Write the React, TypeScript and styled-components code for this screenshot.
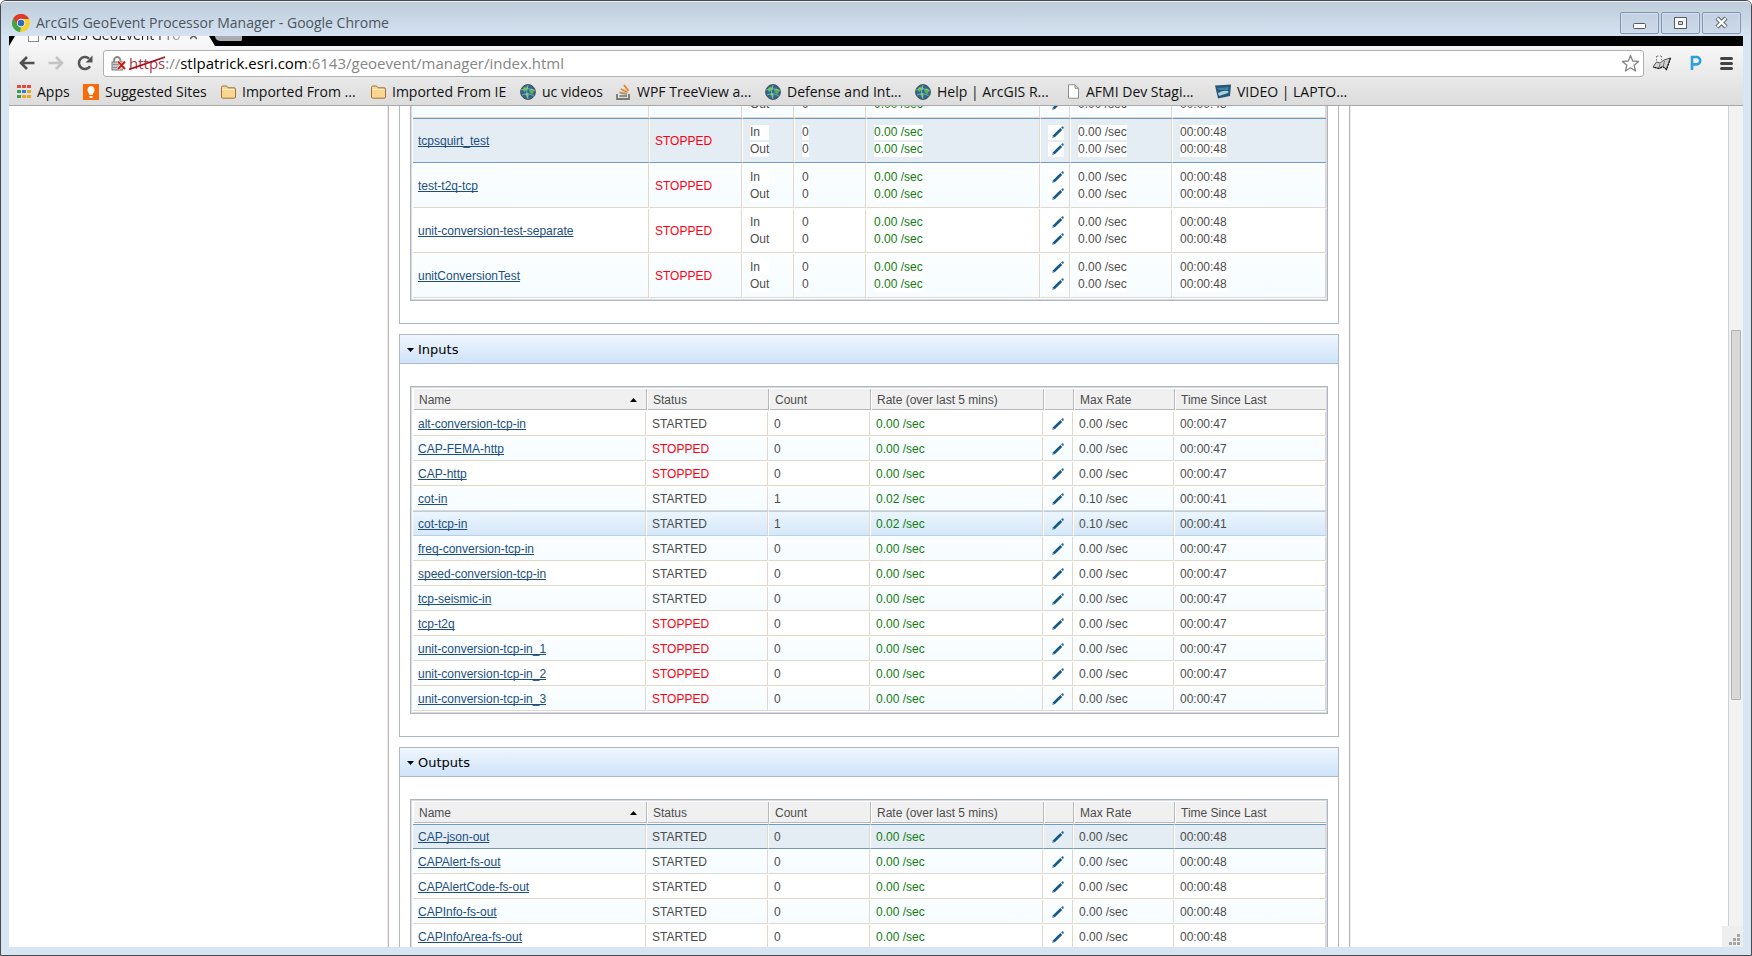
import React from "react";
import styled, { createGlobalStyle, css } from "styled-components";

const uiFont = `"Open Sans", "Noto Sans", sans-serif`;

const GlobalStyle = createGlobalStyle`
  * { box-sizing: border-box; }
  html, body { margin: 0; height: 100%; overflow: hidden; }
  #root { height: 100%; }
  button { font: inherit; color: inherit; background: none; border: 0; padding: 0; cursor: pointer; }
  svg { display: block; flex: none; }
`;

/* ---------- window frame ---------- */

const Window = styled.div`
  display: flex;
  flex-direction: column;
  height: 100vh;
  padding: 0 8px 8px;
  border: 1px solid #4b4a4e;
  border-radius: 6px 6px 0 0;
  background: #d7e4f1;
  font-family: ${uiFont};
`;

const TitleBar = styled.header`
  display: flex;
  align-items: center;
  flex: none;
  height: 35px;
  margin: 0 -8px;
  padding: 7px 10px 0 11px;
  gap: 6px;
  border-top: 1px solid #e6edf5;
  border-radius: 5px 5px 0 0;
  background: linear-gradient(#bfccda, #d4e2f1);
`;

const Title = styled.h1`
  flex: 1;
  margin: 0;
  font-size: 14px;
  font-weight: 400;
  line-height: 20px;
  color: #4c5660;
`;

const WindowButtons = styled.div`
  display: flex;
  gap: 2px;
`;

const WindowButton = styled.button`
  display: flex;
  align-items: center;
  justify-content: center;
  width: 39px;
  height: 22px;
  border: 1px solid #8093b1;
  border-radius: 2px;
  background: linear-gradient(#c3d1e2, #cbd8e8);
  box-shadow: inset 0 0 0 1px #d3deeb;
`;

const TabStrip = styled.div`
  display: flex;
  flex: none;
  height: 10px;
  overflow: hidden;
  background: #000;
`;

const Tab = styled.div`
  display: flex;
  align-items: flex-end;
  width: 206px;
  padding: 0 0 2px 19px;
  background: #f7f7f7;
  clip-path: polygon(0 100%, 6px 0, 200px 0, 206px 100%);
`;

const TabTitle = styled.span`
  flex: none;
  width: 138px;
  margin: 0 7px 0 6px;
  overflow: hidden;
  font-size: 14px;
  line-height: 18px;
  white-space: nowrap;
  color: transparent;
  background: linear-gradient(90deg, #222 112px, #ccc);
  background-clip: text;
`;

const TabSheet = styled.span`
  width: 11px;
  height: 14px;
  margin-bottom: 2px;
  border: 1px solid #8a8a8a;
  background: #fff;
`;

const TabClose = styled.button`
  padding-bottom: 4px;
`;

const NewTab = styled.button`
  width: 27px;
  height: 5px;
  background: #a9adb2;
  border-radius: 0 0 2px 8px;
`;

const Toolbars = styled.div`
  flex: none;
  border-bottom: 1px solid #a8a8a8;
  background: linear-gradient(#f7f7f7, #dcdcdc);
`;

const NavRow = styled.nav`
  display: flex;
  align-items: center;
  height: 34px;
  padding: 0 10px 0 3px;
`;

const NavButton = styled.button`
  display: flex;
  justify-content: center;
  width: 29px;
`;

const AddressBar = styled.div`
  display: flex;
  flex: 1;
  align-items: center;
  height: 27px;
  margin: 1px 0 0 4px;
  padding: 0 3px 0 7px;
  border: 1px solid #b0b0b0;
  border-radius: 3px;
  background: #fff;
`;

const Url = styled.div`
  flex: 1;
  margin-left: 3px;
  padding-bottom: 2px;
  font-size: 15px;
  line-height: 20px;
  color: #858585;
  outline: none;
`;

const Scheme = styled.s`
  position: relative;
  color: #a33a48;
  text-decoration: none;
`;

const Strike = styled.svg`
  position: absolute;
  left: 0;
  top: 3px;
  width: 100%;
  height: 15px;
`;

const Host = styled.span`
  color: #000;
`;

const Extensions = styled.div`
  display: flex;
  align-items: center;
  gap: 18px;
  padding-left: 8px;
`;

const BookmarkRow = styled.nav`
  display: flex;
  align-items: center;
  height: 25px;
  padding: 0 0 2px 8px;
`;

const Bookmark = styled.a<{ $width: number }>`
  display: flex;
  align-items: center;
  flex: none;
  gap: 6px;
  width: ${(p) => p.$width}px;
  font-size: 14px;
  line-height: 20px;
  white-space: nowrap;
  text-decoration: none;
  color: #111;
`;

/* ---------- page ---------- */

const Viewport = styled.div`
  position: relative;
  display: flex;
  flex: 1;
  min-height: 0;
  background: #fff;
`;

const Page = styled.main`
  flex: 1;
  height: 100%;
  padding-left: 1px;
  overflow: hidden;
  font-family: "Liberation Sans", Arial, sans-serif;
  font-size: 12px;
  color: #4c4c4c;
`;

const Sheet = styled.div`
  display: flex;
  flex-direction: column;
  gap: 10px;
  max-width: 962px;
  margin: -37px auto 0;
  padding: 0 10px;
  border: solid #b8b8b8;
  border-width: 0 1px;
  box-shadow: 0 0 0 1px #ececec;
`;

const ScrollTrack = styled.div`
  display: grid;
  flex: none;
  grid-template-rows: 224fr 370fr 247fr;
  width: 15px;
  padding: 0 2px;
  border-left: 1px solid #d0d0d0;
  background: #f2f2f2;
`;

const ScrollThumb = styled.div`
  grid-row: 2;
  border: 1px solid #b0b0b0;
  border-radius: 1px;
  background: #d9d9d9;
`;

const ResizeGrip = styled.div`
  position: absolute;
  right: 0;
  bottom: 0;
  padding: 8px 3px 2px 7px;
  background: #eee;
`;

const Panel = styled.section`
  border: 1px solid #b0b7c6;
`;

const PanelHeading = styled.h2`
  margin: 0;
  border-bottom: 1px solid #b0b7c6;
  background: linear-gradient(#eff6fe, #cfe3f9);
  font: 400 13px/28px "DejaVu Sans", Verdana, sans-serif;
  color: #000;
`;

const PanelToggle = styled.button`
  display: flex;
  align-items: center;
  gap: 4px;
  width: 100%;
  height: 28px;
  padding: 2px 0 0 7px;
`;

const TableFrame = styled.div<{ $flush?: boolean }>`
  margin: ${(p) => (p.$flush ? 0 : 22)}px 10px 22px;
  padding: 2px 1px 2px 2px;
  border: 1px solid #b0b5c3;
  box-shadow: inset 0 0 0 1px #d9dae2;
`;

const Grid = styled.table`
  width: 100%;
  table-layout: fixed;
  border-collapse: separate;
  border-spacing: 0;
`;

const HeadCell = styled.th`
  height: 22px;
  padding: 0 9px 0 5px;
  border: 1px solid #fff;
  border-top: 0;
  border-right: 1px solid #b8b8b8;
  background: #f0f0f0 padding-box;
  box-shadow: inset 0 -1px #b8b8b8;
  font-weight: 400;
  line-height: 20px;
  text-align: left;
  white-space: nowrap;
  &:last-child { border-right: 0; }
`;

const SortLabel = styled.span`
  display: flex;
  align-items: center;
  justify-content: space-between;
`;

type Mark = "selected" | "hover" | undefined;

const Row = styled.tr<{ $mark?: Mark; $tall?: boolean; $tint?: boolean }>`
  > td {
    height: ${(p) => (p.$tall ? 45 : 25)}px;
    padding: 0 0 0 5px;
    border: solid #fff;
    border-width: 1px 1px 1px 0;
    border-bottom-color: #e0d8c9;
    background: ${(p) => (p.$tint ? "linear-gradient(#fbfeff, #f6fcff)" : "#fff")} padding-box;
    box-shadow: inset -1px 0 #e0d8cc;
    ${(p) =>
      p.$mark === "selected" &&
      css`
        border-top-color: #6f9ac4;
        border-bottom-color: #6f9ac4;
        background: #e4ecf4 padding-box;
      `}
    ${(p) =>
      p.$mark === "hover" &&
      css`
        border-top-color: #b5d0ea;
        border-bottom-color: #b5d0ea;
        background: linear-gradient(#ebf5fd, #d6e8f9);
      `}
  }
  > td:last-child { border-right: 0; }
`;

const NameLink = styled.a`
  color: #1c4f80;
  text-decoration: underline;
  text-decoration-thickness: 1px;
  text-underline-offset: 1px;
  text-decoration-skip-ink: none;
`;

const Status = styled.span<{ $stopped: boolean }>`
  color: ${(p) => (p.$stopped ? "#ff0010" : "inherit")};
`;

const Rate = styled.span`
  color: #107c10;
`;

const Pair = styled.div`
  display: inline-grid;
  gap: 2px;
  padding-left: 2px;
  line-height: 15px;
  vertical-align: middle;
  > * { background: #fff; }
`;

const EditButton = styled.button<{ $wide?: boolean }>`
  display: flex;
  align-items: center;
  justify-content: flex-end;
  width: ${(p) => (p.$wide ? 16 : 15)}px;
  height: 15px;
`;

/* ---------- drawings ---------- */

const Pencil = () => (
  <svg width="12" height="12" viewBox="0 0 12 12">
    <path d="M1 9.2 L8.3 2.1 L10.2 4 L3 10.9 L0.2 12 Z" fill="#12598a" />
    <path d="M9 1.4 L10.3 0.3 Q11.3 0 11.8 1.1 Q12 1.9 11.3 2.7 L10.8 3.2 Z" fill="#3b7195" />
    <path d="M0.9 10.1 L2.1 11.1 L0.2 11.9 Z" fill="#b9d0df" />
  </svg>
);

const ChromeLogo = ({ size = 18 }: { size?: number }) => (
  <svg width={size} height={size} viewBox="0 0 18 18">
    <circle cx="9" cy="9" r="9" fill="#f9cf2a" />
    <path d="M1.2 4.5 A9 9 0 0 1 16.8 4.5 L17 5 H9 L5.3 11 Z" fill="#dc3a2c" />
    <path d="M1.2 4.5 L5.5 11.2 L9 13 L8 18 A9 9 0 0 1 1.2 4.5 Z" fill="#3fa648" />
    <circle cx="9" cy="9" r="4.2" fill="#f3f6fa" />
    <circle cx="9" cy="9" r="3.3" fill="#2c6fb8" />
  </svg>
);

const BackArrow = () => (
  <svg width="16" height="14" viewBox="0 0 16 14" fill="none" stroke="#505050" strokeWidth="2.6">
    <path d="M15.5 7 H2.5 M8 1 L2 7 L8 13" />
  </svg>
);

const ForwardArrow = () => (
  <svg width="16" height="14" viewBox="0 0 16 14" fill="none" stroke="#c4c4c4" strokeWidth="2.6">
    <path d="M0.5 7 H13.5 M8 1 L14 7 L8 13" />
  </svg>
);

const Reload = () => (
  <svg width="16" height="16" viewBox="0 0 16 16">
    <path d="M13 11.2 A6 6 0 1 1 12 3.6" fill="none" stroke="#555" strokeWidth="2.6" />
    <path d="M15.5 0.5 V7.5 H8.5 Z" fill="#555" />
  </svg>
);

const BrokenLock = () => (
  <svg width="15" height="15" viewBox="0 0 15 15">
    <path d="M3 7 V4.5 A3.2 3.4 0 0 1 9.4 4.5 V7" fill="none" stroke="#8a8a8a" strokeWidth="2" />
    <rect x="1" y="6" width="10.5" height="8" fill="#c6c6c6" stroke="#7d7d7d" />
    <path d="M2 8.5 H8 M2 11.5 H7" stroke="#8f8f8f" />
    <path d="M7 5.5 L14 13 M14 5.5 L7 13" stroke="#fff" strokeWidth="3" />
    <path d="M7 5.5 L14 13 M14 5.5 L7 13" stroke="#cc1c1c" strokeWidth="2" />
  </svg>
);

const Star = () => (
  <svg width="19" height="19" viewBox="0 0 19 19">
    <path
      d="M9.5 1.5 L11.7 7 L17.6 7.4 L13.1 11.2 L14.6 17 L9.5 13.8 L4.4 17 L5.9 11.2 L1.4 7.4 L7.3 7 Z"
      fill="#fff"
      stroke="#858585"
      strokeWidth="1.3"
      strokeLinejoin="round"
    />
  </svg>
);

const MapTool = () => (
  <svg width="20" height="16" viewBox="0 0 20 16">
    <path d="M4.5 7 L8 8 L12 5 L18.5 3 L14.5 14.5 L11 11.5 L7 13.5 L1 12 Z" fill="#d3d3d3" stroke="#555" />
    <path d="M18.5 3 L14.5 14.5 L11 11.5 L7 13.5 L1 12" fill="none" stroke="#222" strokeWidth="1.4" strokeDasharray="2 1" />
    <path d="M8 9 L7 13 M12.5 6 L11 12" stroke="#777" />
    <path d="M4.5 1 V6 M9.5 1 V5 M5 1 H9" stroke="#777" strokeDasharray="1.5 1.5" />
  </svg>
);

const PinLogo = () => (
  <svg width="12" height="16" viewBox="0 0 12 16">
    <path d="M2 15 V2 H6.5 A3.6 3.6 0 0 1 6.5 9.4 H3" fill="none" stroke="#2f9fdb" strokeWidth="2.6" />
  </svg>
);

const MenuBars = () => (
  <svg width="13" height="13" viewBox="0 0 13 13" stroke="#444" strokeWidth="3" strokeLinecap="round">
    <path d="M1.5 1.5 H11.5 M1.5 6.5 H11.5 M1.5 11.5 H11.5" />
  </svg>
);

const appColors = ["#e24b3c", "#e24b3c", "#e24b3c", "#3f9b55", "#2f7de0", "#eda51a", "#3f9b55", "#eda51a", "#eda51a"];

const AppsIcon = () => (
  <svg width="14" height="13" viewBox="0 0 14 13">
    {appColors.map((fill, i) => (
      <rect key={i} x={(i % 3) * 5} y={Math.floor(i / 3) * 5} width="4" height="3" fill={fill} />
    ))}
  </svg>
);

const Bulb = () => (
  <svg width="16" height="16" viewBox="0 0 16 16">
    <rect width="16" height="16" fill="#f76b0b" />
    <path d="M8 2 A4 4 0 0 1 10.2 9 L9.7 11 H6.3 L5.8 9 A4 4 0 0 1 8 2 Z M6.5 12 H9.5 V14 H6.5 Z" fill="#fff" />
  </svg>
);

const Folder = () => (
  <svg width="15" height="14" viewBox="0 0 15 14">
    <path d="M0.5 12 V2.5 Q0.5 1 2 1 H5.5 L7 2.8 H13 Q14.5 2.8 14.5 4 V12 Q14.5 13.2 13 13.2 H2 Q0.5 13.2 0.5 12 Z" fill="#fbd691" stroke="#a37038" />
    <path d="M1.5 4.5 H13.5" stroke="#fff0cc" />
  </svg>
);

const Globe = () => (
  <svg width="16" height="16" viewBox="0 0 16 16">
    <circle cx="8" cy="8" r="7.4" fill="#2c6796" stroke="#4a4f4a" />
    <path d="M3 4 Q6 1.5 8 3 L7 6 L4.5 8 L3 7 Z M9 6 Q12 3 14 6 L13 10 L10 9 Z M5 10 L8 9 L9 12 L7 14 Z" fill="#57b24c" />
    <path d="M1 6 Q8 3 15 7 M2 11 Q8 8 14 12 M8 1 Q5 8 8 15" fill="none" stroke="#b8d6cf" strokeWidth="0.6" />
  </svg>
);

const Stack = () => (
  <svg width="15" height="16" viewBox="0 0 15 16" fill="none">
    <path d="M1 10 V15 H13 V10" stroke="#777" strokeWidth="1.8" />
    <path d="M3.5 12 H11" stroke="#8a8278" strokeWidth="1.8" />
    <path d="M3.5 8.5 L11 10" stroke="#b5946c" strokeWidth="1.8" />
    <path d="M4.8 5 L11.5 8.3" stroke="#dc8d33" strokeWidth="1.8" />
    <path d="M8 1 L12.5 6.8" stroke="#f27a21" strokeWidth="1.8" />
  </svg>
);

const SheetIcon = () => (
  <svg width="13" height="15" viewBox="0 0 13 15">
    <path d="M1.5 0.8 H8 L11.5 4.3 V14.2 H1.5 Z M8 0.8 V4.3 H11.5" fill="#fff" stroke="#8d8d8d" />
  </svg>
);

const VideoIcon = () => (
  <svg width="16" height="15" viewBox="0 0 16 15">
    <path d="M0 1.5 L16 0.5 L15 12 L3 14.5 Z" fill="#24587a" />
    <path d="M2 4 L14 3 L13 6 L4 6 Z" fill="#3f7da3" />
    <path d="M3 9 Q8 6 13.5 7 L13 9 L4 12 Z" fill="#a9cfe0" />
  </svg>
);

const Triangle = ({ up }: { up?: boolean }) => (
  <svg width="7" height="4" viewBox="0 0 7 4">
    <path d={up ? "M0 4 L3.5 0 L7 4 Z" : "M0 0 H7 L3.5 4 Z"} fill="#000" />
  </svg>
);

const GripDots = () => (
  <svg width="11" height="11" viewBox="0 0 11 11" fill="#a5a5a5">
    {[[8, 0], [4, 4], [8, 4], [0, 8], [4, 8], [8, 8]].map(([x, y]) => (
      <rect key={`${x}-${y}`} x={x} y={y} width="3" height="3" />
    ))}
  </svg>
);

/* ---------- data ---------- */

const bookmarks = [
  { label: "Apps", icon: <AppsIcon />, width: 66 },
  { label: "Suggested Sites", icon: <Bulb />, width: 138 },
  { label: "Imported From ...", icon: <Folder />, width: 150 },
  { label: "Imported From IE", icon: <Folder />, width: 149 },
  { label: "uc videos", icon: <Globe />, width: 96 },
  { label: "WPF TreeView a...", icon: <Stack />, width: 149 },
  { label: "Defense and Int...", icon: <Globe />, width: 150 },
  { label: "Help | ArcGIS R...", icon: <Globe />, width: 152 },
  { label: "AFMI Dev Stagi...", icon: <SheetIcon />, width: 148 },
  { label: "VIDEO | LAPTO...", icon: <VideoIcon />, width: 140 },
];

interface Service {
  name: string;
  mark?: Mark;
}

const services: Service[] = [
  { name: "" },
  { name: "tcpsquirt_test", mark: "selected" },
  { name: "test-t2q-tcp" },
  { name: "unit-conversion-test-separate" },
  { name: "unitConversionTest" },
];

interface Connector {
  name: string;
  stopped?: boolean;
  count?: number;
  rate?: string;
  max?: string;
  since: string;
  mark?: Mark;
}

const inputs: Connector[] = [
  { name: "alt-conversion-tcp-in", since: "00:00:47" },
  { name: "CAP-FEMA-http", stopped: true, since: "00:00:47" },
  { name: "CAP-http", stopped: true, since: "00:00:47" },
  { name: "cot-in", count: 1, rate: "0.02", max: "0.10", since: "00:00:41" },
  { name: "cot-tcp-in", count: 1, rate: "0.02", max: "0.10", since: "00:00:41", mark: "hover" },
  { name: "freq-conversion-tcp-in", since: "00:00:47" },
  { name: "speed-conversion-tcp-in", since: "00:00:47" },
  { name: "tcp-seismic-in", since: "00:00:47" },
  { name: "tcp-t2q", stopped: true, since: "00:00:47" },
  { name: "unit-conversion-tcp-in_1", stopped: true, since: "00:00:47" },
  { name: "unit-conversion-tcp-in_2", stopped: true, since: "00:00:47" },
  { name: "unit-conversion-tcp-in_3", stopped: true, since: "00:00:47" },
];

const outputs: Connector[] = [
  { name: "CAP-json-out", since: "00:00:48", mark: "selected" },
  { name: "CAPAlert-fs-out", since: "00:00:48" },
  { name: "CAPAlertCode-fs-out", since: "00:00:48" },
  { name: "CAPInfo-fs-out", since: "00:00:48" },
  { name: "CAPInfoArea-fs-out", since: "00:00:48" },
];

const serviceCols = [237, 93, 52, 72, 174, 30, 102, 153];
const connectorCols = [234, 122, 102, 173, 30, 101, 151];

const Col = styled.col<{ $w: number }>`
  width: ${(p) => p.$w}px;
`;

const Columns = ({ widths }: { widths: number[] }) => (
  <colgroup>
    {widths.map((w, i) => (
      <Col key={i} $w={w} />
    ))}
  </colgroup>
);

const Twice = ({ children }: { children: React.ReactNode }) => (
  <Pair>
    <span>{children}</span>
    <span>{children}</span>
  </Pair>
);

const ServiceTable = () => (
  <TableFrame $flush>
    <Grid>
      <Columns widths={serviceCols} />
      <tbody>
        {services.map((s, i) => (
          <Row key={i} $tall $mark={s.mark} $tint={i % 2 === 0}>
            <td>{s.name && <NameLink href="#">{s.name}</NameLink>}</td>
            <td>{s.name && <Status $stopped>STOPPED</Status>}</td>
            <td>
              <Pair>
                <span>In</span>
                <span>Out</span>
              </Pair>
            </td>
            <td><Twice>0</Twice></td>
            <td><Rate><Twice>0.00 /sec</Twice></Rate></td>
            <td>
              <Pair>
                <EditButton $wide aria-label="Edit in rate"><Pencil /></EditButton>
                <EditButton $wide aria-label="Edit out rate"><Pencil /></EditButton>
              </Pair>
            </td>
            <td><Twice>0.00 /sec</Twice></td>
            <td><Twice>00:00:48</Twice></td>
          </Row>
        ))}
      </tbody>
    </Grid>
  </TableFrame>
);

const ConnectorPanel = ({ title, rows }: { title: string; rows: Connector[] }) => (
  <Panel>
    <PanelHeading>
      <PanelToggle aria-expanded="true">
        <Triangle />
        {title}
      </PanelToggle>
    </PanelHeading>
    <TableFrame>
      <Grid>
        <Columns widths={connectorCols} />
        <thead>
          <tr>
            <HeadCell aria-sort="ascending">
              <SortLabel>Name<Triangle up /></SortLabel>
            </HeadCell>
            <HeadCell>Status</HeadCell>
            <HeadCell>Count</HeadCell>
            <HeadCell>Rate (over last 5 mins)</HeadCell>
            <HeadCell />
            <HeadCell>Max Rate</HeadCell>
            <HeadCell>Time Since Last</HeadCell>
          </tr>
        </thead>
        <tbody>
          {rows.map((r, i) => (
            <Row key={r.name} $mark={r.mark} $tint={i % 2 === 1}>
              <td><NameLink href="#">{r.name}</NameLink></td>
              <td><Status $stopped={!!r.stopped}>{r.stopped ? "STOPPED" : "STARTED"}</Status></td>
              <td>{r.count ?? 0}</td>
              <td><Rate>{r.rate ?? "0.00"} /sec</Rate></td>
              <td><EditButton aria-label={`Edit ${r.name}`}><Pencil /></EditButton></td>
              <td>{r.max ?? "0.00"} /sec</td>
              <td>{r.since}</td>
            </Row>
          ))}
        </tbody>
      </Grid>
    </TableFrame>
  </Panel>
);

export default function App() {
  return (
    <>
      <GlobalStyle />
      <Window>
        <TitleBar>
          <ChromeLogo />
          <Title>ArcGIS GeoEvent Processor Manager - Google Chrome</Title>
          <WindowButtons>
            <WindowButton aria-label="Minimize">
              <svg width="14" height="14" viewBox="0 0 14 14">
                <rect x="0.5" y="7.5" width="12" height="5" rx="1" fill="#fafafa" stroke="#555b66" />
              </svg>
            </WindowButton>
            <WindowButton aria-label="Restore">
              <svg width="13" height="12" viewBox="0 0 13 12">
                <path d="M0.5 0.5 H12.5 V11.5 H0.5 Z M4.5 4.5 V7.5 H8.5 V4.5 Z" fill="#fafafa" fillRule="evenodd" stroke="#555b66" />
              </svg>
            </WindowButton>
            <WindowButton aria-label="Close">
              <svg width="15" height="13" viewBox="0 0 15 13">
                <path d="M3 2 L12 11 M12 2 L3 11" stroke="#555b66" strokeWidth="4.4" />
                <path d="M3.3 2.3 L11.7 10.7 M11.7 2.3 L3.3 10.7" stroke="#fafafa" strokeWidth="2.4" />
              </svg>
            </WindowButton>
          </WindowButtons>
        </TitleBar>

        <TabStrip>
          <Tab>
            <TabSheet />
            <TabTitle>ArcGIS GeoEvent Pro</TabTitle>
            <TabClose aria-label="Close tab">
              <svg width="7" height="8" viewBox="0 0 7 8">
                <path d="M0 0 L7 7 M7 0 L0 7" stroke="#666" strokeWidth="1.6" />
              </svg>
            </TabClose>
          </Tab>
          <NewTab aria-label="New tab" />
        </TabStrip>

        <Toolbars>
          <NavRow>
            <NavButton aria-label="Back"><BackArrow /></NavButton>
            <NavButton aria-label="Forward"><ForwardArrow /></NavButton>
            <NavButton aria-label="Reload"><Reload /></NavButton>
            <AddressBar>
              <BrokenLock />
              <Url role="textbox" aria-label="Address" tabIndex={0}>
                <Scheme>
                  https
                  <Strike viewBox="0 0 35 15" preserveAspectRatio="none">
                    <path d="M0 13.5 L35 1" stroke="#a81420" strokeWidth="1.8" />
                  </Strike>
                </Scheme>
                ://<Host>stlpatrick.esri.com</Host>:6143/geoevent/manager/index.html
              </Url>
              <Star />
            </AddressBar>
            <Extensions>
              <MapTool />
              <PinLogo />
              <MenuBars />
            </Extensions>
          </NavRow>
          <BookmarkRow>
            {bookmarks.map((b, i) => (
              <Bookmark key={i} href="#" $width={b.width}>
                {b.icon}
                {b.label}
              </Bookmark>
            ))}
          </BookmarkRow>
        </Toolbars>

        <Viewport>
          <Page>
            <Sheet>
              <Panel>
                <ServiceTable />
              </Panel>
              <ConnectorPanel title="Inputs" rows={inputs} />
              <ConnectorPanel title="Outputs" rows={outputs} />
            </Sheet>
          </Page>
          <ScrollTrack>
            <ScrollThumb />
          </ScrollTrack>
          <ResizeGrip>
            <GripDots />
          </ResizeGrip>
        </Viewport>
      </Window>
    </>
  );
}
